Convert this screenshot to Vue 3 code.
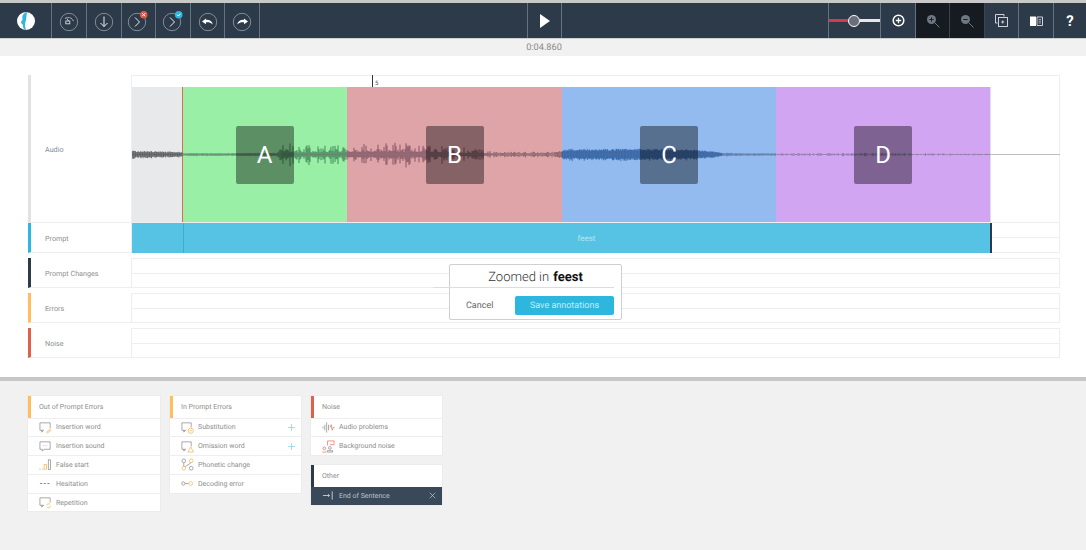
<script setup>
import { computed } from 'vue'

const W = 928
const H = 135
const MID = 67.5
const knots = [
  [0, 3.6], [49, 2.6], [51, 1.2], [100, 1.1], [145, 1.6], [150, 9], [153, 15], [160, 9], [215, 10], [250, 12], [300, 10],
  [330, 7], [350, 5], [365, 2.4], [420, 2.6], [430, 4], [440, 5.5], [540, 5.5], [570, 4], [590, 1.6], [620, 0.9], [700, 1.4], [760, 1.6], [790, 1], [858, 0.4], [928, 0]
]
const env = (x) => {
  for (let i = 1; i < knots.length; i++) {
    if (x <= knots[i][0]) {
      const [a, av] = knots[i - 1]
      const [b, bv] = knots[i]
      return av + ((bv - av) * (x - a)) / (b - a)
    }
  }
  return 0
}
let seed = 41
const rnd = () => {
  seed = (seed * 16807) % 2147483647
  return seed / 2147483647
}
const segments = computed(() => {
  const spec = [
    [0, 50, '#47474b', 0.7, 0.6, 1],
    [50, 150, '#2f7a48', 1, 0.6, 0.8],
    [150, 215, '#22603a', 1, 0.2, 1.4],
    [215, 365, '#66384a', 1, 0.2, 1.4],
    [365, 430, '#7a4450', 1.1, 0.4, 1],
    [430, 590, '#2a5a9e', 0.6, 0.6, 0.7],
    [590, 644, '#2a5a9e', 1, 0.4, 1],
    [644, 858, '#7b4ea3', 1.3, 0.1, 1.5]
  ]
  return spec.map(([from, to, color, step, base, pow]) => {
    let d = ''
    for (let x = from; x < to; x += step) {
      const a = env(x) * (base + (1 - base) * Math.pow(rnd(), pow * 1.6)) + 0.3
      d += `M${x.toFixed(2)} ${(MID - a).toFixed(1)}V${(MID + a * (0.8 + 0.4 * rnd())).toFixed(1)}`
    }
    return { id: from, color, d }
  })
})

const outOfPrompt = ['Insertion word', 'Insertion sound', 'False start', 'Hesitation', 'Repetition']
const inPrompt = [
  { t: 'Substitution', plus: true },
  { t: 'Omission word', plus: true },
  { t: 'Phonetic change' },
  { t: 'Decoding error' }
]
const regions = [
  { l: 'A', c: 'green', w: 165, slot: 165 },
  { l: 'B', c: 'red', w: 215, slot: 215 },
  { l: 'C', c: 'blue', w: 214, slot: 214 },
  { l: 'D', c: 'purple', w: 215, slot: 214 }
]
const tracks = [
  { n: 'Prompt Changes', c: 'navy' },
  { n: 'Errors', c: 'amber' },
  { n: 'Noise', c: 'coral' }
]
</script>

<template>
  <div class="page">
    <header class="toolbar">
      <div class="cell logo">
        <svg width="20" height="20" viewBox="0 0 20 20">
          <circle cx="10" cy="10" r="9" fill="#fff" />
          <path d="M11 1C7 2.500 6 5 6.500 7.500 7 9 5 10 5 11.500 5.500 13 7 13 7 15c0 2 1 3.500 2.500 4h.5C8.500 15 9 12 10 9c.5-3 .5-5.500 1-8z" fill="#2db7de" />
        </svg>
      </div>
      <div class="cell w35">
        <svg class="ic" viewBox="0 0 20 20">
          <circle cx="10" cy="10" r="8.700" class="ring" />
          <path d="M6 6.500a5.500 5.500 0 0 1 8.500 3" class="thin" stroke-dasharray="2 .7" />
          <path d="M8 6.500l1.500 2.500" class="thin" />
          <rect x="6.800" y="9" width="4" height="2.800" class="thin" />
        </svg>
      </div>
      <div class="cell w35">
        <svg class="ic" viewBox="0 0 20 20">
          <circle cx="10" cy="10" r="8.700" class="ring" />
          <path d="M10 4.500v10M6.500 11l3.500 3.500 3.500-3.500" class="bright" />
        </svg>
      </div>
      <div class="cell w34">
        <svg class="ic shift" viewBox="0 0 20 20" overflow="visible">
          <circle cx="10" cy="10" r="8.700" class="ring" />
          <path d="M8 5.500l4.500 4.500L8 14.500" class="bright" />
          <circle cx="16.700" cy="2.700" r="3.800" fill="#e0574a" />
          <path d="M15.200 1.200l3 3M18.200 1.200l-3 3" stroke="#fff" stroke-width="1" />
        </svg>
      </div>
      <div class="cell w35">
        <svg class="ic shift" viewBox="0 0 20 20" overflow="visible">
          <circle cx="10" cy="10" r="8.700" class="ring" />
          <path d="M8 5.500l4.500 4.500L8 14.500" class="bright" />
          <circle cx="16.700" cy="2.700" r="3.800" fill="#2db7de" />
          <path d="M15 2.700l1.300 1.300 2.300-2.400" fill="none" stroke="#fff" stroke-width="1" />
        </svg>
      </div>
      <div class="cell w34">
        <svg class="ic" viewBox="0 0 20 20">
          <circle cx="10" cy="10" r="8.700" class="ring" />
          <path d="M8 6.500L4 9.500l4 2.800v-2c2.800-.2 4.800.3 6.800 2.200-.6-3.300-3.300-5-6.800-4.700z" fill="#fff" />
        </svg>
      </div>
      <div class="cell w35">
        <svg class="ic" viewBox="0 0 20 20">
          <circle cx="10" cy="10" r="8.700" class="ring" />
          <path d="M12 6.500l4 3-4 2.800v-2c-2.800-.2-4.800.3-6.800 2.200.6-3.300 3.300-5 6.800-4.700z" fill="#fff" />
        </svg>
      </div>
      <div class="cell fill-left"></div>
      <div class="cell w34">
        <svg width="12" height="14" viewBox="0 0 12 14"><path d="M1 0l10 7-10 7z" fill="#fff" /></svg>
      </div>
      <div class="cell fill-right"></div>
      <div class="cell slider">
        <span class="slide-red"></span><span class="slide-knob"></span><span class="slide-white"></span>
      </div>
      <div class="cell w35">
        <svg width="13" height="13" viewBox="0 0 13 13">
          <circle cx="6.500" cy="6.500" r="5.300" fill="none" stroke="#fff" stroke-width="1.500" />
          <path d="M3.800 6.500h5.400M6.500 3.800v5.400" stroke="#fff" stroke-width="1.300" />
        </svg>
      </div>
      <div class="cell w34 dark">
        <svg width="14" height="14" viewBox="0 0 14 14">
          <circle cx="5.500" cy="5.500" r="4.500" fill="#6f7780" />
          <path d="M3.300 5.500h4.400M5.500 3.300v4.400" stroke="#1a1f27" stroke-width="1" />
          <path d="M9 9l4.500 4.500" stroke="#6f7780" stroke-width="1" />
        </svg>
      </div>
      <div class="cell w35 dark">
        <svg width="14" height="14" viewBox="0 0 14 14">
          <circle cx="5.500" cy="5.500" r="4.500" fill="#6f7780" />
          <path d="M3.300 5.500h4.400" stroke="#1a1f27" stroke-width="1" />
          <path d="M9 9l4.500 4.500" stroke="#6f7780" stroke-width="1" />
        </svg>
      </div>
      <div class="cell w34">
        <svg width="13" height="13" viewBox="0 0 13 13" fill="none" stroke="#dfe3e6" stroke-width=".9">
          <path d="M2.500 9H.5V.5H9v2" />
          <rect x="3.500" y="3.500" width="9" height="9" />
          <path d="M6.200 8h3M7.700 6.500v3" />
        </svg>
      </div>
      <div class="cell w35">
        <svg width="13" height="10" viewBox="0 0 13 10">
          <path d="M0 .5h5.800a.6.6 0 0 1 .2.400V10H0z" fill="#fff" />
          <path d="M7 1h5.500v8.500H7z" fill="none" stroke="#dfe3e6" stroke-width=".9" />
          <path d="M8.500 3.500h2.500M8.500 5.200h2.500M8.500 7h2.500" stroke="#dfe3e6" stroke-width=".7" />
        </svg>
      </div>
      <div class="cell last">?</div>
    </header>

    <div class="timebar">0:04.860</div>

    <main class="editor">
      <section class="row audio">
        <div class="label grey-edge">Audio</div>
        <div class="audio-col">
          <div class="ruler"><span class="tick">5</span></div>
          <div class="wave-area">
            <div class="silence"></div>
            <div v-for="r in regions" :key="r.l" class="region" :class="r.c" :style="{ width: r.w + 'px' }"></div>
            <svg class="wave" :width="W" :height="H" :viewBox="`0 0 ${W} ${H}`">
              <line x1="0" :x2="W" y1="67.500" y2="67.500" stroke="#bdbdbd" stroke-width="1" />
              <path v-for="s in segments" :key="s.id" :d="s.d" :stroke="s.color" stroke-width=".7" fill="none" />
            </svg>
            <div class="letters">
              <div class="silence-spacer"></div>
              <div v-for="r in regions" :key="r.l" class="letter-slot" :style="{ width: r.slot + 'px' }">
                <div class="letter">{{ r.l }}</div>
              </div>
            </div>
          </div>
        </div>
      </section>

      <section class="row track prompt">
        <div class="label blue-edge">Prompt</div>
        <div class="lanes">
          <div class="lane"></div>
          <div class="lane"></div>
          <div class="prompt-bar">
            <span class="prompt-head"></span>
            <span class="prompt-text">feest</span>
          </div>
        </div>
      </section>

      <section v-for="t in tracks" :key="t.n" class="row track spaced">
        <div class="label" :class="t.c + '-edge'">{{ t.n }}</div>
        <div class="lanes">
          <div class="lane"></div>
          <div class="lane"></div>
        </div>
      </section>

      <div class="dialog">
        <div class="dialog-title"><span class="zoomed">Zoomed in</span> <b>feest</b></div>
        <div class="dialog-actions">
          <span class="cancel">Cancel</span>
          <span class="save">Save annotations</span>
        </div>
      </div>
    </main>

    <footer class="palette">
      <div class="panel wide">
        <div class="panel-head amber-edge">Out of Prompt Errors</div>
        <div v-for="(t, i) in outOfPrompt" :key="t" class="item">
          <svg class="item-ic" viewBox="0 0 14 14" fill="none" stroke="#8c8c8c" stroke-width=".8">
            <template v-if="i === 0">
              <path d="M5 10H1V2h11v6" /><path d="M3 10v2l2-2" /><path d="M8 12l4-3 1 1-4 3z" stroke="#f2b65e" />
            </template>
            <template v-else-if="i === 1">
              <path d="M3.500 10H1V2h11v8H5.500l-2 2z" /><path d="M4 6h5.500" stroke="#f2b65e" stroke-dasharray="1 1" />
            </template>
            <template v-else-if="i === 2">
              <path d="M0 12h5" stroke="#f2b65e" stroke-dasharray="2 1" /><rect x="5.500" y="7" width="2.500" height="5" stroke="#f2b65e" /><rect x="10" y="2" width="2.500" height="10.500" />
            </template>
            <template v-else-if="i === 3">
              <path d="M1 7h12" stroke="#666" stroke-dasharray="2.500 1.500" />
            </template>
            <template v-else>
              <path d="M5 10H1V2h11v5" /><path d="M3 10v2l2-2" /><path d="M8 10a2.500 2.500 0 0 1 4-1M12.500 11a2.500 2.500 0 0 1-4 1" stroke="#f2b65e" />
            </template>
          </svg>
          <span>{{ t }}</span>
        </div>
      </div>

      <div class="panel">
        <div class="panel-head amber-edge">In Prompt Errors</div>
        <div v-for="(it, i) in inPrompt" :key="it.t" class="item">
          <svg class="item-ic" viewBox="0 0 14 14" fill="none" stroke="#8c8c8c" stroke-width=".8">
            <template v-if="i === 0">
              <path d="M5 10H1V2h10v5" /><path d="M3 10v2l2-2" /><circle cx="10.500" cy="10.500" r="2.800" stroke="#f2b65e" /><path d="M9 10.500h3" stroke="#f2b65e" />
            </template>
            <template v-else-if="i === 1">
              <path d="M5 10H1V2h10v5" /><path d="M3 10v2l2-2" /><path d="M10.500 7.500l3 5.500h-6z" stroke="#f2b65e" />
            </template>
            <template v-else-if="i === 2">
              <circle cx="3" cy="3" r="2" /><circle cx="11" cy="3" r="2" stroke="#f2b65e" /><circle cx="3" cy="11" r="2" stroke="#f2b65e" /><circle cx="11" cy="11" r="2" /><path d="M3 5v4M11 5L4.500 9.500" />
            </template>
            <template v-else>
              <circle cx="2.500" cy="7" r="1.800" /><path d="M4.300 7h4" /><circle cx="10.500" cy="7" r="2" stroke="#f2b65e" />
            </template>
          </svg>
          <span>{{ it.t }}</span>
          <svg v-if="it.plus" class="plus" viewBox="0 0 9 9"><path d="M4.500 0v9M0 4.500h9" stroke="#6fcbe6" stroke-width=".8" /></svg>
        </div>
      </div>

      <div class="stack">
        <div class="panel">
          <div class="panel-head coral-edge">Noise</div>
          <div class="item">
            <svg class="item-ic" viewBox="0 0 14 14" fill="none" stroke="#8c8c8c" stroke-width=".8">
              <path d="M1 6v2M3 4v6M5 1.500v11M7 4v6" /><path d="M8.500 7l1.500-3 1 6 1-3h1.500" stroke="#e8735f" />
            </svg>
            <span>Audio problems</span>
          </div>
          <div class="item">
            <svg class="item-ic" viewBox="0 0 14 14" fill="none" stroke="#8c8c8c" stroke-width=".8">
              <path d="M6 6V1h7v4H8.500" stroke="#e8735f" /><circle cx="2.500" cy="9" r="1.500" stroke="#e8735f" /><path d="M.5 13h4" stroke="#e8735f" /><circle cx="8.500" cy="8.500" r="1.500" /><path d="M5.500 13h6v-1.500h-6z" />
            </svg>
            <span>Background noise</span>
          </div>
        </div>
        <div class="panel">
          <div class="panel-head navy-edge">Other</div>
          <div class="item selected">
            <svg class="item-ic" viewBox="0 0 14 14" fill="none" stroke="#d5dae0" stroke-width=".9">
              <path d="M1 7h7M6.500 5.500L8 7 6.500 8.500" /><path d="M11 2.500v9" />
            </svg>
            <span>End of Sentence</span>
            <svg class="plus" viewBox="0 0 9 9"><path d="M1 1l7 7M8 1L1 8" stroke="#d5dae0" stroke-width=".8" /></svg>
          </div>
        </div>
      </div>
    </footer>
  </div>
</template>

<style scoped>
.page {
  width: 1086px;
  height: 550px;
  overflow: hidden;
  background: #f1f1f1;
  font-family: Roboto, "Liberation Sans", sans-serif;
  text-rendering: geometricPrecision;
  display: flex;
  flex-direction: column;
  box-sizing: border-box;
  padding-top: 3px;
}
.toolbar {
  height: 35px;
  display: flex;
  background: #2c3a49;
  box-shadow: 0 -3px 0 #c9c9c9, 0 1px 0 #d0d0d0;
  flex: none;
}
.cell {
  box-sizing: border-box;
  border-right: 1px solid #667280;
  display: flex;
  align-items: center;
  justify-content: center;
  flex: none;
}
.logo { width: 52px; }
.w35 { width: 35px; }
.w34 { width: 34px; }
.fill-left { width: 268px; }
.fill-right { width: 267px; }
.slider { width: 52px; justify-content: flex-start; }
.slide-red { width: 19px; height: 3px; background: #d9364f; }
.slide-white { flex: 1; height: 3px; background: #e6e6e6; }
.slide-knob {
  width: 12px;
  height: 12px;
  box-sizing: border-box;
  border-radius: 50%;
  background: #6b6e7c;
  border: 1px solid #fff;
  flex: none;
}
.dark { background: #161b22; border-right-color: #3b4550; }
.last {
  width: 32px;
  border-right: 0;
  color: #fff;
  font-size: 15px;
  font-weight: 700;
}
.ic { width: 20px; height: 20px; margin-top: 3px; }
.shift { margin-right: 3px; }
.ring { fill: none; stroke: #98a1aa; stroke-width: .8; }
.thin { fill: none; stroke: #d5d9dd; stroke-width: .9; }
.bright { fill: none; stroke: #eceff1; stroke-width: 1; }

.timebar {
  height: 18px;
  flex: none;
  display: flex;
  align-items: center;
  justify-content: center;
  padding-left: 2px;
  font-size: 9.200px;
  color: #8a8a8a;
}
.editor {
  position: relative;
  height: 325px;
  flex: none;
  background: #fff;
  box-sizing: border-box;
  padding: 19px 26px 0 28px;
  border-bottom: 4px solid #c6c6c6;
}
.row { display: flex; }
.label {
  width: 104px;
  box-sizing: border-box;
  border-left: 3px solid #e4e4e4;
  border-right: 1px solid #eee;
  border-bottom: 1px solid #eee;
  padding: 2px 0 0 14px;
  display: flex;
  align-items: center;
  font-size: 7.200px;
  color: #8e8e8e;
  flex: none;
}
.grey-edge { border-left-color: #e2e2e2; color: #7f8aa0; }
.blue-edge { border-left-color: #2db7de; }
.navy-edge { border-left-color: #2c3a49; }
.amber-edge { border-left-color: #ffbd5c; }
.coral-edge { border-left-color: #e0604c; }

.audio { height: 148px; }
.audio-col {
  flex: 1;
  display: flex;
  flex-direction: column;
  border-top: 1px solid #eee;
  border-right: 1px solid #eee;
  border-bottom: 1px solid #eee;
}
.ruler {
  height: 11px;
  flex: none;
  position: relative;
}
.tick {
  position: absolute;
  left: 240px;
  top: -1px;
  height: 12px;
  border-left: 1px solid #333;
  padding-left: 2px;
  font-size: 6px;
  line-height: 17px;
  color: #555;
}
.wave-area {
  position: relative;
  height: 135px;
  display: flex;
}
.silence { width: 50px; background: #e8e9eb; flex: none; }
.region { flex: none; box-sizing: border-box; }
.green { background: #9aefa6; border-left: 1.500px solid #e06a4a; }
.red { background: #dea4a8; }
.blue { background: #93bbf0; }
.purple { background: #d2a5f3; border-right: 1px solid #d7dff5; }
.wave { position: absolute; left: 0; top: 0; }
.letters { position: absolute; left: 0; top: 0; height: 135px; display: flex; align-items: center; }
.silence-spacer { width: 50px; }
.letter-slot { display: flex; justify-content: center; }
.letter {
  width: 58px;
  height: 58px;
  margin-top: 1px;
  border-radius: 2px;
  background: rgba(0, 0, 0, .4);
  color: #fff;
  font-size: 24px;
  display: flex;
  align-items: center;
  justify-content: center;
}

.track { height: 30px; }
.spaced { margin-top: 5px; }
.lanes {
  position: relative;
  flex: 1;
  display: flex;
  flex-direction: column;
  border-top: 1px solid #eee;
  border-right: 1px solid #eee;
  border-bottom: 1px solid #eee;
  box-sizing: border-box;
}
.prompt .lanes { border-top: 0; }
.lane { flex: 1; }
.lane + .lane { border-top: 1px solid #eee; }
.prompt-bar {
  position: absolute;
  left: 0;
  top: 0;
  bottom: -1px;
  width: 860px;
  box-sizing: border-box;
  padding-left: 51px;
  background: #56c3e4;
  border-right: 2px solid #2c3a49;
  display: flex;
  align-items: center;
  justify-content: center;
}
.prompt-head {
  position: absolute;
  left: 51px;
  top: 0;
  bottom: 0;
  width: 1px;
  background: #39aed2;
}
.prompt-text { font-size: 8px; color: #b5e5f4; }

.dialog {
  position: absolute;
  left: 449px;
  top: 208px;
  width: 173px;
  height: 56px;
  box-sizing: border-box;
  background: #fff;
  border: 1px solid #cfcfcf;
  border-radius: 2px;
  display: flex;
  flex-direction: column;
}
.dialog-title {
  height: 23px;
  box-sizing: border-box;
  margin: 0 7px 0 -17px;
  border-bottom: 1px solid #ddd;
  display: flex;
  align-items: center;
  justify-content: center;
  gap: 4px;
  padding: 3px 0 0 24px;
  font-size: 13px;
  color: #333;
  flex: none;
}
.zoomed { font-weight: 300; }
.dialog-title b { color: #111; font-weight: 700; }
.dialog-actions {
  flex: 1;
  display: flex;
  align-items: center;
  justify-content: space-between;
  padding: 4px 7px 0 16px;
}
.cancel { font-size: 9px; color: #666; }
.save {
  width: 99px;
  height: 19px;
  border-radius: 2px;
  background: #2db7de;
  color: #c4ecf7;
  font-size: 9px;
  display: flex;
  align-items: center;
  justify-content: center;
}

.palette {
  display: flex;
  align-items: flex-start;
  gap: 10px;
  padding: 15px 0 0 28px;
}
.stack {
  display: flex;
  flex-direction: column;
  gap: 10px;
}
.panel {
  width: 131px;
  background: #fff;
  box-shadow: 0 0 0 1px #ececec;
}
.wide { width: 132px; }
.panel-head {
  height: 21.500px;
  box-sizing: border-box;
  border-left-width: 3px;
  border-left-style: solid;
  display: flex;
  align-items: center;
  padding-left: 8px;
  font-size: 7px;
  color: #8e8e8e;
}
.item {
  height: 18.800px;
  box-sizing: border-box;
  border-top: 1px solid #eee;
  display: flex;
  align-items: center;
  font-size: 7px;
  color: #8e8e8e;
  padding-left: 11px;
}
.item-ic { width: 13px; height: 13px; margin-right: 4px; flex: none; }
.plus { width: 7px; height: 7px; margin-left: auto; margin-right: 6px; }
.selected { background: #39495a; color: #b9c1ca; border-top: 0; }
</style>

<style>
html, body { margin: 0; background: #f1f1f1; }
</style>
